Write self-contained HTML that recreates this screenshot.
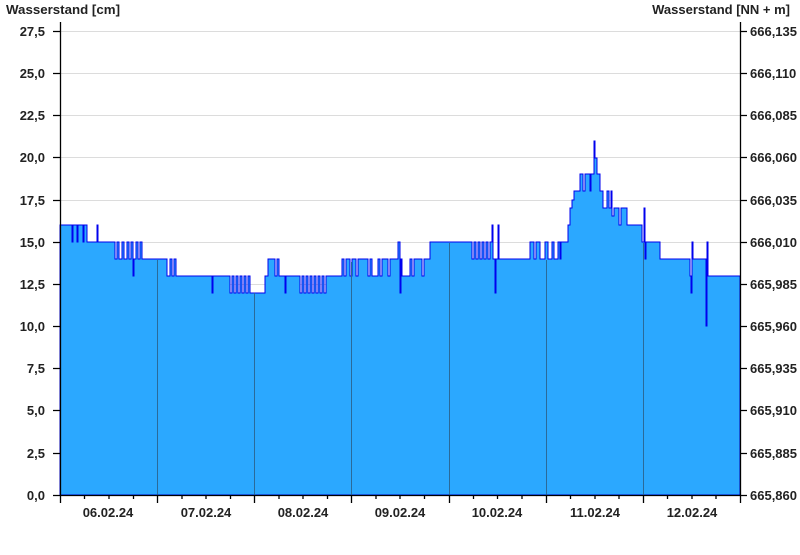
<!DOCTYPE html>
<html><head><meta charset="utf-8"><style>
html,body{margin:0;padding:0;background:#fff;}
svg text{font-family:"Liberation Sans",Arial,sans-serif;font-weight:bold;font-size:13px;fill:#222;}
</style></head><body>
<svg width="800" height="550" viewBox="0 0 800 550" xmlns="http://www.w3.org/2000/svg">
<rect width="800" height="550" fill="#fff"/>
<g stroke="#dcdcdc" stroke-width="1">
<line x1="60" y1="31.5" x2="740" y2="31.5"/><line x1="60" y1="73.5" x2="740" y2="73.5"/><line x1="60" y1="115.5" x2="740" y2="115.5"/><line x1="60" y1="157.5" x2="740" y2="157.5"/><line x1="60" y1="200.5" x2="740" y2="200.5"/><line x1="60" y1="242.5" x2="740" y2="242.5"/><line x1="60" y1="284.5" x2="740" y2="284.5"/><line x1="60" y1="326.5" x2="740" y2="326.5"/><line x1="60" y1="368.5" x2="740" y2="368.5"/><line x1="60" y1="410.5" x2="740" y2="410.5"/><line x1="60" y1="453.5" x2="740" y2="453.5"/>
</g>
<path fill="#2ba8ff" stroke="#0000ee" stroke-width="1" d="M60,495 V225 H72 V242 H73 V225 H77 V242 H78 V225 H83 V242 H84 V225 H87 V242 H97 V225 H98 V242 H115 V259 H117 V242 H119 V259 H122 V242 H124 V259 H127 V242 H129 V259 H131 V242 H133 V276 H134 V259 H136 V242 H138 V259 H140 V242 H142 V259 H167 V276 H170 V259 H172 V276 H174 V259 H176 V276 H212 V293 H213 V276 H230 V293 H232 V276 H234 V293 H236 V276 H238 V293 H240 V276 H242 V293 H244 V276 H246 V293 H248 V276 H250 V293 H265 V276 H268 V259 H275 V276 H277 V259 H279 V276 H285 V293 H286 V276 H300 V293 H302 V276 H304 V293 H306 V276 H308 V293 H310 V276 H312 V293 H314 V276 H316 V293 H318 V276 H320 V293 H322 V276 H324 V293 H326 V276 H342 V259 H344 V276 H346 V259 H350 V276 H352 V259 H356 V276 H358 V259 H368 V276 H370 V259 H372 V276 H378 V259 H380 V276 H382 V259 H388 V276 H390 V259 H398 V242 H400 V293 H401 V259 H402 V276 H410 V259 H412 V276 H414 V259 H422 V276 H424 V259 H430 V242 H472 V259 H474 V242 H476 V259 H478 V242 H480 V259 H482 V242 H484 V259 H486 V242 H488 V259 H490 V242 H492 V225 H493 V259 H495 V293 H496 V259 H498 V225 H499 V259 H530 V242 H534 V259 H536 V242 H540 V259 H545 V242 H548 V259 H552 V242 H554 V259 H558 V242 H560 V259 H561 V242 H568 V225 H570 V208 H572 V200 H574 V191 H580 V174 H583 V191 H585 V174 H590 V191 H591 V174 H594 V141 H595 V158 H597 V174 H600 V191 H603 V208 H607 V191 H609 V208 H611 V191 H612 V216 H614 V208 H619 V225 H621 V208 H627 V225 H642 V242 H644 V208 H645 V259 H646 V242 H660 V259 H690 V276 H691 V293 H692 V242 H693 V259 H706 V326 H707 V242 H708 V276 H740 V495 Z"/>
<g stroke="#2a6a9a" stroke-width="1">
<line x1="157.5" y1="260" x2="157.5" y2="495"/><line x1="254.5" y1="293" x2="254.5" y2="495"/><line x1="351.5" y1="262" x2="351.5" y2="495"/><line x1="449.5" y1="243" x2="449.5" y2="495"/><line x1="546.5" y1="260" x2="546.5" y2="495"/><line x1="643.5" y1="243" x2="643.5" y2="495"/>
</g>
<g stroke="#000" stroke-width="1.3">
<line x1="60.5" y1="22" x2="60.5" y2="503"/><line x1="740.5" y1="22" x2="740.5" y2="495"/><line x1="53" y1="495.5" x2="740" y2="495.5"/>
<path d="M53,31.5H60M53,73.5H60M53,115.5H60M53,157.5H60M53,200.5H60M53,242.5H60M53,284.5H60M53,326.5H60M53,368.5H60M53,410.5H60M53,453.5H60M740,31.5H747M740,73.5H747M740,115.5H747M740,157.5H747M740,200.5H747M740,242.5H747M740,284.5H747M740,326.5H747M740,368.5H747M740,410.5H747M740,453.5H747M740,495.5H747"/>
<path d="M157.5,495V503M254.5,495V503M351.5,495V503M449.5,495V503M546.5,495V503M643.5,495V503M740.5,495V503"/>
<path d="M84.5,495V499M109,495V499M133.5,495V499M182,495V499M206,495V499M230.5,495V499M279,495V499M303,495V499M327.5,495V499M376,495V499M400,495V499M424.5,495V499M473.5,495V499M497.5,495V499M522,495V499M570.5,495V499M595,495V499M619,495V499M667.5,495V499M692,495V499M716,495V499"/>
</g>
<text x="6" y="14" textLength="114" lengthAdjust="spacingAndGlyphs">Wasserstand [cm]</text>
<text x="790" y="14" text-anchor="end">Wasserstand [NN + m]</text>
<g text-anchor="end">
<text x="45" y="36">27,5</text><text x="45" y="78">25,0</text><text x="45" y="120">22,5</text><text x="45" y="162">20,0</text><text x="45" y="205">17,5</text><text x="45" y="247">15,0</text><text x="45" y="289">12,5</text><text x="45" y="331">10,0</text><text x="45" y="373">7,5</text><text x="45" y="415">5,0</text><text x="45" y="458">2,5</text><text x="45" y="500">0,0</text>
</g>
<g>
<text x="750" y="36">666,135</text><text x="750" y="78">666,110</text><text x="750" y="120">666,085</text><text x="750" y="162">666,060</text><text x="750" y="205">666,035</text><text x="750" y="247">666,010</text><text x="750" y="289">665,985</text><text x="750" y="331">665,960</text><text x="750" y="373">665,935</text><text x="750" y="415">665,910</text><text x="750" y="458">665,885</text><text x="750" y="500">665,860</text>
</g>
<g text-anchor="middle">
<text x="108" y="517">06.02.24</text><text x="206" y="517">07.02.24</text><text x="303" y="517">08.02.24</text><text x="400" y="517">09.02.24</text><text x="497" y="517">10.02.24</text><text x="595" y="517">11.02.24</text><text x="692" y="517">12.02.24</text>
</g>
</svg>
</body></html>
